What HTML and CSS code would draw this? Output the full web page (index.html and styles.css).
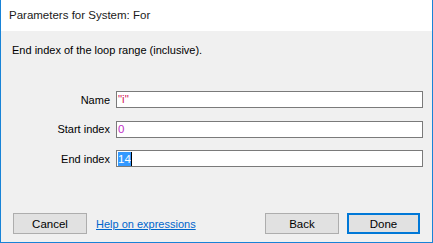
FILE: index.html
```html
<!DOCTYPE html>
<html lang="en">
<head>
    <meta charset="UTF-8">
    <meta name="viewport" content="width=device-width, initial-scale=1.0">
    <title>Parameters for System: For</title>
    <link rel="stylesheet" href="styles.css">
</head>
<body>

    <div class="window">
        <div class="titlebar">Parameters for System: For</div>

        <div class="content">
            <p class="description">End index of the loop range (inclusive).</p>

            <!-- Parameter fields -->
            <div class="fields">
                <label class="field-label" for="nameInput">Name</label>
                <div class="field-input" id="nameInput"><span class="str">"i"</span></div>

                <label class="field-label" for="startInput">Start index</label>
                <div class="field-input" id="startInput"><span class="num">0</span></div>

                <label class="field-label" for="endInput">End index</label>
                <div class="field-input" id="endInput"><span class="selected">14</span><span class="caret"></span></div>
            </div>

            <!-- Dialog buttons -->
            <div class="footer">
                <button class="btn">Cancel</button>
                <a class="help-link" href="#">Help on expressions</a>
                <span class="spacer"></span>
                <button class="btn">Back</button>
                <button class="btn btn-default">Done</button>
            </div>
        </div>
    </div>

</body>
</html>
```

FILE: styles.css
```css
/* Dialog window */
body {
    margin: 0;
    padding: 0;
    font-family: 'Liberation Sans', Arial, sans-serif;
    font-size: 11px;
    color: #000;
    background-color: #f0f0f0;
}

.window {
    width: 433px;
    height: 243px;
    box-sizing: border-box;
    border: 1px solid #1883d7;
    border-top: none;
    display: flex;
    flex-direction: column;
    background-color: #f0f0f0;
}

.titlebar {
    height: 31px;
    line-height: 31px;
    padding-left: 8px;
    background-color: #ffffff;
    color: #1a1a1a;
    font-size: 11.5px;
}

.content {
    flex: 1;
    display: flex;
    flex-direction: column;
}

.description {
    margin: 11px 0 0 11px;
    line-height: 16px;
}

/* Parameter fields */
.fields {
    display: grid;
    grid-template-columns: 109px 307px;
    column-gap: 6px;
    row-gap: 12.5px;
    margin-top: 33px;
    align-items: center;
}

.field-label {
    text-align: right;
}

.field-input {
    height: 17px;
    box-sizing: border-box;
    border: 1px solid #7a7a7a;
    background-color: #ffffff;
    line-height: 15px;
    padding-left: 1px;
    display: flex;
    align-items: center;
    font-size: 11.5px;
}

.str {
    color: #d41a5a;
}

.num {
    color: #c030c8;
}

.selected {
    background-color: #3399ff;
    color: #ffffff;
    line-height: 14px;
}

.caret {
    display: inline-block;
    width: 1px;
    height: 14px;
    background-color: #000;
}

/* Footer */
.footer {
    display: flex;
    align-items: center;
    margin-top: auto;
    padding: 0 12px 8px 12px;
}

.btn {
    width: 74px;
    height: 21px;
    box-sizing: border-box;
    background-color: #e1e1e1;
    border: 1px solid #adadad;
    font-family: inherit;
    font-size: 11.5px;
    color: #000;
    padding: 0;
}

.btn-default {
    border: 2px solid #0078d7;
    margin-left: 8px;
    width: 73px;
}

.help-link {
    margin-left: 9px;
    color: #0066cc;
    text-decoration: underline;
}

.spacer {
    flex: 1;
}
```
